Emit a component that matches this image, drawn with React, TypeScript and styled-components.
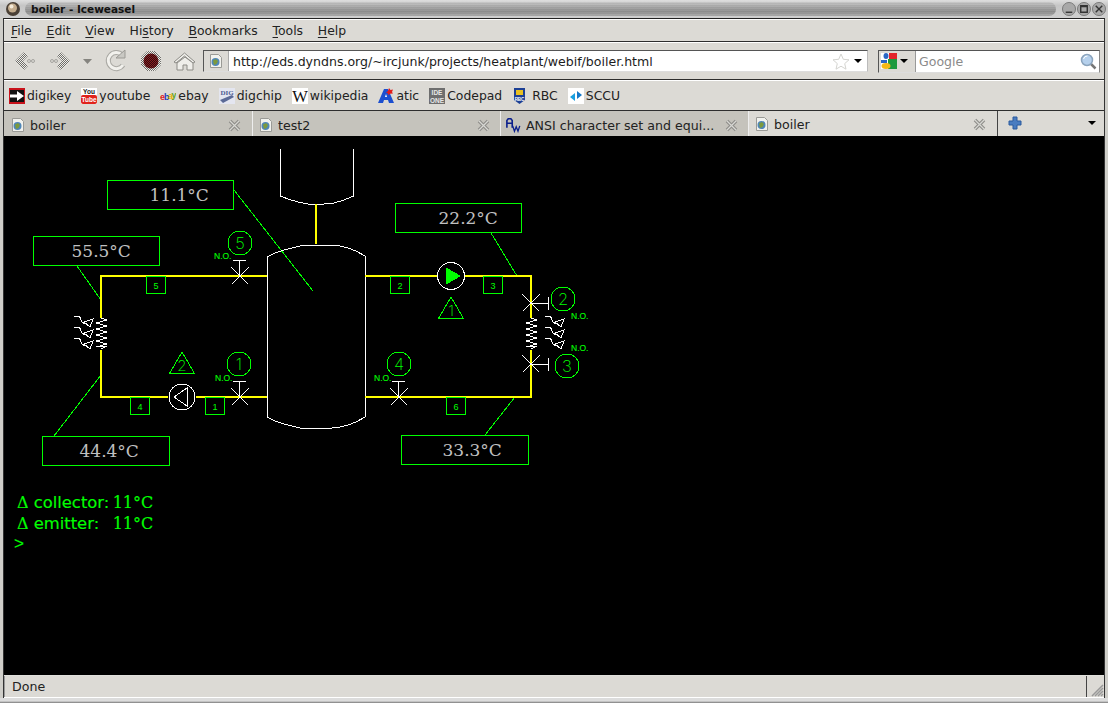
import React from 'react';
import styled, { createGlobalStyle } from 'styled-components';

const Global = createGlobalStyle`
  html, body { margin: 0; padding: 0; background: #c9c8c4; overflow: hidden; }
  #root { width: 1108px; height: 703px; }
`;

const UI = `"DejaVu Sans", "Liberation Sans", sans-serif`;
const GREEN = '#00ff00';

const Window = styled.div`
  width: 1108px; height: 703px; display: flex; flex-direction: column; box-sizing: border-box;
  background: #cfcec9; font-family: ${UI}; color: #1a1a1a; overflow: hidden;
`;
const TitleBar = styled.div`
  height: 18px; flex: none; display: flex; align-items: center; padding: 0 2px 0 5px; box-sizing: border-box; gap: 4px;
  background: linear-gradient(#dedede, #c6c6c6 30%, #cfcfcf);
`;
const TitleStripe = styled.div`
  flex: 1; height: 14px; border-radius: 7px; box-sizing: border-box; padding-left: 6px;
  display: flex; align-items: center; font-size: 10.5px; font-weight: 700; color: #111; line-height: 14px;
  background:
    repeating-linear-gradient(#0000 0 1px, #0000000d 1px 2px),
    linear-gradient(#c9c9c9, #a6a6a6 40%, #919191 70%, #b0b0b0);
`;
const WinButtons = styled.div`
  display: flex; gap: 1px; align-items: center; margin-left: 2px;
`;
const Body = styled.div`
  flex: 1; margin: 0 3px 0 3px; border-left: 1px solid #333; border-right: 1px solid #333; border-top: 1px solid #222;
  display: flex; flex-direction: column; min-height: 0; background: #dcdad5;
`;
const Bar = styled.div<{ $h: number }>`
  height: ${p => p.$h}px; flex: none; box-sizing: border-box; display: flex; align-items: center;
  background: #dcdad5; border-top: 1px solid #fff; border-bottom: 1px solid #2e2e2e;
`;
const MenuBar = styled(Bar)`
  padding-left: 7px; font-size: 12.4px;
`;
const MenuItem = styled.span`
  margin-right: 14.8px; color: #222;
  u { text-underline-offset: 2px; }
`;
const NavBar = styled(Bar)`
  padding-right: 4px;
`;
const NavIcons = styled.div`
  display: flex; align-items: center; width: 199px; flex: none;
`;
const UrlBox = styled.div`
  width: 665px; height: 22px; flex: none; display: flex; align-items: center; background: #fff; box-sizing: border-box;
  border: 1px solid #555; border-right-color: #bbb; border-bottom-color: #ddd;
`;
const UrlIconCell = styled.div`
  width: 25px; height: 100%; flex: none; background: #dcdad5; border-right: 1px solid #aaa; display: flex;
  align-items: center; justify-content: center; box-sizing: border-box;
`;
const UrlText = styled.div`
  flex: 1; padding-left: 4px; font-size: 12.55px; color: #1c1c1c; white-space: nowrap;
`;
const SearchBox = styled.div`
  width: 222px; height: 23px; flex: none; margin-left: 10px; display: flex; align-items: center; background: #fff; box-sizing: border-box;
  border: 1px solid #555; border-right-color: #888; border-bottom-color: #ddd;
`;
const SearchEngine = styled.div`
  width: 37px; height: 100%; flex: none; background: #dcdad5; border-right: 1px solid #999; display: flex; align-items: center;
  gap: 3px; padding-left: 2px; box-sizing: border-box;
`;
const SearchHint = styled.div`
  flex: 1; padding-left: 3px; font-size: 12.55px; color: #8a8a8a;
`;
const Caret = styled.span<{ $w?: number; $ml?: number; $mr?: number }>`
  width: 0; height: 0; flex: none; display: inline-block;
  margin-left: ${p => p.$ml ?? 0}px; margin-right: ${p => p.$mr ?? 0}px;
  border-left: ${p => p.$w ?? 4}px solid transparent; border-right: ${p => p.$w ?? 4}px solid transparent; border-top: ${p => p.$w ?? 4}px solid #000;
`;
const BookmarksBar = styled(Bar)`
  padding-left: 5px; font-size: 12.4px; gap: 10px;
`;
const Bookmark = styled.div`
  display: flex; align-items: center; gap: 2px; color: #222; white-space: nowrap;
  &:nth-last-child(2) { margin-left: 2px; }
`;
const TabStrip = styled.div`
  height: 25px; flex: none; display: flex; background: #dcdad5;
`;
const Tab = styled.div<{ $active?: boolean }>`
  width: ${p => (p.$active ? 249 : 248)}px; flex: none; box-sizing: border-box; display: flex; align-items: center;
  padding: ${p => (p.$active ? '1px 11px 0 5px' : '3px 10px 0 5px')}; gap: 4px;
  background: ${p => (p.$active ? '#dcdad5' : '#c5c3bc')}; border-right: 1px solid ${p => (p.$active ? '#444' : '#eee')};
  font-size: 12.6px; color: #222;
  &:first-child { width: 249px; padding-left: 6px; padding-right: 11px; }
`;
const TabTitle = styled.span`
  flex: 1; white-space: nowrap; overflow: hidden;
`;
const TabTail = styled.div`
  flex: 1; display: flex; align-items: center; justify-content: space-between; padding: 0 8.5px 2px 10px;
`;
const Content = styled.main`
  flex: 1; background: #000; min-height: 0; display: flex; flex-direction: column; border-bottom: 1px solid #e0e0dc;
`;
const Diagram = styled.svg`
  display: block; flex: none; shape-rendering: crispEdges;
`;
const Console = styled.div`
  padding-left: 10px; color: ${GREEN}; -webkit-text-stroke: 0.15px ${GREEN};
  font-family: "DejaVu Serif", serif; font-size: 16px; line-height: 21px; white-space: pre;
`;
const ConsoleLine = styled.div`
  padding-left: 3px;
`;
const Prompt = styled.div`
  font-family: "Liberation Sans", sans-serif; font-size: 17px; line-height: 20px;
`;
const ConsoleWord = styled.span`
  display: inline-block; width: 79px; font-family: "DejaVu Sans", sans-serif; font-size: 16.4px;
`;
const StatusBar = styled.div`
  height: 22px; flex: none; display: flex; background: #dcdad5; border-bottom: 1px solid #fff; box-sizing: border-box;
`;
const StatusText = styled.div`
  flex: 1; font-size: 12.6px; color: #222; padding: 3px 0 0 7px; border-left: 1px solid #999;
`;
const Grip = styled.div`
  width: 17px; flex: none; border-left: 1px solid #444; display: flex; align-items: flex-end; justify-content: flex-end;
`;
const WindowFoot = styled.div`
  height: 5px; flex: none; background: linear-gradient(#dcdcdc 60%, #777);
`;

const Favicon = () => (
  <svg width="16" height="16" viewBox="0 0 16 16" style={{ flex: 'none' }}>
    <path d="M2.500 1.500h8l3 3v10h-11z" fill="#f2f2ee" stroke="#9a9a96" />
    <circle cx="7.500" cy="9" r="4" fill="#4f86b8" />
    <path d="M5 7.500l3-1.500 2 2-1.500 3-2.500 1z" fill="#7d9a3c" />
  </svg>
);
const Close = () => (
  <svg width="13" height="13" viewBox="0 0 13 13" style={{ flex: 'none' }}>
    <path d="M2 2l9 9M11 2l-9 9" stroke="#8f8e8a" strokeWidth="3.500" />
    <path d="M2 2l9 9M11 2l-9 9" stroke="#d8d8d4" strokeWidth="1.200" />
  </svg>
);

const NavArt = () => (
  <svg width="199" height="28" viewBox="0 0 199 28">
    <defs>
      <pattern id="dith" width="2" height="2" patternUnits="userSpaceOnUse">
        <rect width="2" height="2" fill="#efeeea" />
        <rect width="1" height="1" fill="#6f6e6a" />
        <rect x="1" y="1" width="1" height="1" fill="#6f6e6a" />
      </pattern>
      <pattern id="dithDark" width="2" height="2" patternUnits="userSpaceOnUse">
        <rect width="2" height="2" fill="#8a1c20" />
        <rect width="1" height="1" fill="#2e0a0c" />
        <rect x="1" y="1" width="1" height="1" fill="#2e0a0c" />
      </pattern>
    </defs>
    {/* back */}
    <path d="M11 14L20 5l4 4-5 5 5 5-4 4z" fill="url(#dith)" />
    <circle cx="25" cy="14" r="1.500" fill="none" stroke="#a5a4a0" />
    <circle cx="29" cy="14" r="1.500" fill="none" stroke="#a5a4a0" />
    {/* forward */}
    <circle cx="48" cy="14" r="1.500" fill="none" stroke="#a5a4a0" />
    <circle cx="52" cy="14" r="1.500" fill="none" stroke="#a5a4a0" />
    <path d="M66 14L57 5l-4 4 5 5-5 5 4 4z" fill="url(#dith)" />
    <path d="M79 12h9l-4.500 5z" fill="#85847f" />
    {/* reload */}
    <path d="M118 8a8 8 0 1 0 1 10" fill="none" stroke="#a9a8a3" strokeWidth="5" />
    <path d="M118 8a8 8 0 1 0 1 10" fill="none" stroke="#f2f1ed" strokeWidth="3" />
    <path d="M112 11h9V3z" fill="#c9c8c3" stroke="#9b9a95" />
    {/* stop */}
    <path d="M143 4h8l6 6v8l-6 6h-8l-6-6v-8z" fill="url(#dith)" />
    <circle cx="147" cy="14" r="7.500" fill="url(#dithDark)" />
    {/* home */}
    <path d="M170 15l10.500-9 10.500 9-2 1-8.500-7-8.500 7z" fill="#f1f0ec" stroke="#8c8b86" />
    <path d="M173 16v7h6v-5h4v5h6v-7l-8-6z" fill="#efeeea" stroke="#8c8b86" />
  </svg>
);

const GoogleMark = () => (
  <svg width="16" height="16" viewBox="0 0 16 16" style={{ flex: 'none' }}>
    <rect width="16" height="16" fill="#fff" />
    <rect x="8" y="0" width="8" height="7" fill="#e3242b" />
    <rect x="7" y="6" width="9" height="10" fill="#1d9a3f" />
    <ellipse cx="5" cy="3" rx="2.500" ry="3" fill="#2966c4" />
    <rect x="0" y="7" width="6" height="3" fill="#2966c4" />
    <ellipse cx="5" cy="13" rx="4.500" ry="3" fill="#f5b915" />
  </svg>
);
const Lens = () => (
  <svg width="17" height="17" viewBox="0 0 17 17" style={{ marginRight: 2, flex: 'none' }}>
    <path d="M10.500 10.500l5 5" stroke="#777" strokeWidth="2.500" />
    <circle cx="7" cy="7" r="5.500" fill="#b5d0ec" stroke="#8ba4bd" strokeWidth="1.500" />
    <path d="M3.500 6a4 4 0 0 1 4-3" stroke="#fff" fill="none" />
  </svg>
);
const Star = () => (
  <svg width="18" height="17" viewBox="0 0 18 17" style={{ flex: 'none' }}>
    <path d="M9 1l2.300 5.300 5.700.5-4.300 3.800 1.300 5.600-5-3-5 3 1.300-5.600L1 6.800l5.700-.5z" fill="#fff" stroke="#d4d4d0" />
  </svg>
);

const MiniFont = `"Liberation Sans", sans-serif`;
const BmIcon = ({ kind }: { kind: string }) => {
  switch (kind) {
    case 'digikey':
      return (
        <svg width="16" height="16" viewBox="0 0 16 16">
          <rect width="16" height="16" fill="#c8131b" />
          <rect x="1" y="2" width="14" height="12" fill="#111" />
          <path d="M1 6.500h7V3l7 5-7 5V9.500H1z" fill="#fff" />
        </svg>
      );
    case 'youtube':
      return (
        <svg width="16" height="16" viewBox="0 0 16 16">
          <rect width="16" height="16" fill="#fff" />
          <rect y="7" width="16" height="9" rx="2" fill="#e0231c" />
          <text x="8" y="6" fontSize="6.500" textAnchor="middle" fontWeight="700" fill="#222" fontFamily={MiniFont}>You</text>
          <text x="8" y="14" fontSize="6.500" textAnchor="middle" fontWeight="700" fill="#fff" fontFamily={MiniFont}>Tube</text>
        </svg>
      );
    case 'ebay':
      return (
        <svg width="16" height="16" viewBox="0 0 16 16">
          <text x="0" y="12" fontSize="9" fontWeight="700" fill="#e0231c" fontFamily={MiniFont}>e</text>
          <text x="4" y="11.500" fontSize="9" fontWeight="700" fill="#1a3fb5" fontFamily={MiniFont}>b</text>
          <text x="8" y="10.500" fontSize="9" fontWeight="700" fill="#e8b400" fontFamily={MiniFont}>a</text>
          <text x="11.500" y="9.500" fontSize="9" fontWeight="700" fill="#5ea51e" fontFamily={MiniFont}>y</text>
        </svg>
      );
    case 'digchip':
      return (
        <svg width="16" height="16" viewBox="0 0 16 16">
          <rect width="16" height="16" fill="#e4e6f0" />
          <text x="8" y="6.500" fontSize="7" textAnchor="middle" fontWeight="700" fill="#4a5a90" fontFamily={`"Liberation Serif", serif`}>DIG</text>
          <path d="M1 12l12-5 2 2-11 6z" fill="#5b6a96" />
        </svg>
      );
    case 'wikipedia':
      return (
        <svg width="16" height="16" viewBox="0 0 16 16">
          <rect width="16" height="16" fill="#fff" />
          <text x="8" y="13.500" fontSize="16.500" textAnchor="middle" fill="#111" fontFamily={`"Liberation Serif", serif`}>W</text>
        </svg>
      );
    case 'atic':
      return (
        <svg width="16" height="16" viewBox="0 0 16 16">
          <path d="M0 15L6 1h4l6 14h-5l-1-3H6l-1 3z" fill="#1c4fd0" />
          <path d="M7 9h2l-1-3z" fill="#fff" />
          <path d="M11 0l1.500 2 2.500-.5-1 2.500 1 1.500-3 .2-1.500 1.300-1-2-1.500-.5 2-1.500z" fill="#e21c1c" />
        </svg>
      );
    case 'codepad':
      return (
        <svg width="16" height="16" viewBox="0 0 16 16">
          <rect width="16" height="16" fill="#6e6e6e" />
          <text x="8" y="7" fontSize="6.500" textAnchor="middle" fontWeight="700" fill="#e8e8e8" fontFamily={MiniFont}>IDE</text>
          <text x="8" y="14.500" fontSize="6.500" textAnchor="middle" fontWeight="700" fill="#e8e8e8" fontFamily={MiniFont}>ONE</text>
        </svg>
      );
    case 'rbc':
      return (
        <svg width="16" height="16" viewBox="0 0 16 16">
          <path d="M0 0h11v12l-5.500 4L0 12z" fill="#1c3f94" />
          <path d="M2 2h7v5H2z" fill="#e8c020" />
          <text x="5.500" y="13" fontSize="4.500" textAnchor="middle" fontWeight="700" fill="#fff" fontFamily={MiniFont}>RBC</text>
        </svg>
      );
    default:
      return (
        <svg width="16" height="16" viewBox="0 0 16 16">
          <rect width="16" height="16" fill="#fff" />
          <path d="M2 9l5-4v8z" fill="#1aa0e0" />
          <path d="M14 7L9 3v8z" fill="#1478c8" />
        </svg>
      );
  }
};

const AnsiIcon = () => (
  <svg width="16" height="16" viewBox="0 0 18 16" style={{ flex: 'none' }}>
    <path d="M1 11V3l1.500-2h3L7 3v8M1 6h6" fill="none" stroke="#0b1f8c" strokeWidth="1.800" />
    <path d="M7.500 9l2 6 2-5 2 5 2-6" fill="none" stroke="#0b1f8c" strokeWidth="1.500" />
  </svg>
);

/* ---- boiler schematic ---- */
const W = '#ffffff';
const Y = '#ffff00';
const Wire = styled.polyline<{ $c: string; $w?: number }>`
  fill: none; stroke: ${p => p.$c}; stroke-width: ${p => p.$w ?? 1}px;
`;
const Outline = styled.rect`
  fill: none; stroke: ${GREEN}; stroke-width: 1px;
`;
const Temp = styled.text`
  font-family: "DejaVu Serif", serif; font-size: 17px; fill: #c0c0c0;
`;
const Num = styled.text<{ $s?: number }>`
  font-family: Inter, "Liberation Sans", sans-serif; font-weight: 200; font-size: ${p => p.$s ?? 16.5}px; fill: ${GREEN}; text-anchor: middle;
`;
const TagNum = styled.text`
  font-family: "Liberation Sans", sans-serif; font-size: 9px; fill: ${GREEN}; text-anchor: middle;
`;
const NO = styled.text`
  font-family: "Liberation Sans", sans-serif; font-size: 8.500px; fill: ${GREEN}; stroke: ${GREEN}; stroke-width: 0.1px;
`;

const TempBox = ({ x, y, w, h, tx, t }: { x: number; y: number; w: number; h: number; tx: number; t: string }) => (
  <g>
    <Outline x={x + 0.5} y={y + 0.5} width={w} height={h} />
    <Temp x={tx - 0.5} y={y + h / 2 + 6.500}>{t}</Temp>
  </g>
);
const Tag = ({ x, y, w = 19, h = 17, t }: { x: number; y: number; w?: number; h?: number; t: string }) => (
  <g>
    <Outline x={x + 0.5} y={y + 0.5} width={w} height={h} />
    <TagNum x={x + w / 2 + 0.5} y={y + h / 2 + 4}>{t}</TagNum>
  </g>
);
const Cross = ({ x, y }: { x: number; y: number }) => (
  <path
    d={`M${x - 8.500} ${y - 8.500}L${x + 8.500} ${y + 8.500}M${x + 8.500} ${y - 8.500}L${x - 8.500} ${y + 8.500}`}
    stroke={W} strokeWidth="1" fill="none"
  />
);
const StemUp = ({ x, y }: { x: number; y: number }) => (
  <path d={`M${x + 0.5} ${y}V${y - 16}M${x - 6} ${y - 15.500}H${x + 7}`} stroke={W} strokeWidth="1" fill="none" />
);
const StemRight = ({ x, y }: { x: number; y: number }) => (
  <path d={`M${x} ${y + 0.5}H${x + 17}M${x + 17.500} ${y - 6}V${y + 7}`} stroke={W} strokeWidth="1" fill="none" />
);
const Bubble = ({ x, y, t }: { x: number; y: number; t: string }) => (
  <g>
    <circle cx={x} cy={y} r={12} fill="none" stroke={GREEN} strokeWidth="1" />
    <Num x={x} y={y + 6}>{t}</Num>
  </g>
);
const Alarm = ({ x, top, t }: { x: number; top: number; t: string }) => (
  <g>
    <path d={`M${x} ${top}L${x + 12.500} ${top + 21.500}H${x - 12.500}Z`} fill="none" stroke={GREEN} strokeWidth="1" />
    <Num x={x} y={top + 19} $s={15}>{t}</Num>
  </g>
);
const coil = (x: number) => {
  const pts: string[] = [`${x},318`];
  for (let i = 0; i < 5; i++) {
    const y = 320 + i * 6;
    pts.push(`${x + 6},${y}`, `${x - 5},${y + 3}`);
  }
  pts.push(`${x + 6},346`, `${x},349`);
  return pts.join(' ');
};
const Rays = ({ x, y }: { x: number; y: number }) => (
  <g>
    {[0, 1, 2].map(i => (
      <g key={i} transform={`translate(${x} ${y + i * 11})`} stroke={W} strokeWidth="1" fill="none">
        <path d="M0 0h4q2 0 2.500 3t3 4h3" />
        <path d="M19 3l-9 3 6 5z" />
      </g>
    ))}
  </g>
);

const tankTop = '267,257 275,253 284,250 292,248 300,246 316,245 332,245 340,246 348,248 356,251 365,256';
const tankBot = '267,417 275,421 284,424 292,426 300,428 316,428 332,428 340,427 348,425 356,422 365,417';

const Schematic = () => (
  <Diagram width="600" height="356" viewBox="4 136 600 356">
    {/* leaders */}
    <path d="M234 190L313 291M77 266L101 300M101 375L54 436M491 233L517 276M515 397L485 435" stroke={GREEN} strokeWidth="1" fill="none" />
    {/* storage vessels */}
    <Wire $c={W} points="280.500,149 280.500,196 288,199 298,202 308,204 324,204 334,203 344,200 353.500,196 353.500,149" />
    <Wire $c={W} points={tankTop} />
    <Wire $c={W} points={tankBot} />
    <Wire $c={W} points="267.500,257 267.500,417" />
    <Wire $c={W} points="365.500,256 365.500,417" />
    {/* pipes */}
    <Wire $c={Y} $w={2} points="316,204 316,244" />
    <Wire $c={Y} $w={2} points="101,318 101,276 267,276" />
    <Wire $c={Y} $w={2} points="101,350 101,397 168,397" />
    <Wire $c={Y} $w={2} points="196,397 267,397" />
    <Wire $c={Y} $w={2} points="365,276 437,276" />
    <Wire $c={Y} $w={2} points="465,276 531,276 531,318" />
    <Wire $c={Y} $w={2} points="365,397 531,397 531,350" />
    {/* coils */}
    <Wire $c={W} points={coil(101)} />
    <Wire $c={W} points={coil(531)} />
    <Rays x={74} y={316} />
    <Rays x={545} y={316} />
    {/* pumps */}
    <circle cx="182" cy="397" r="13" fill="none" stroke={W} />
    <path d="M174 397L187 388V406Z" fill="none" stroke={W} />
    <circle cx="451" cy="276" r="13.500" fill="none" stroke={W} />
    <path d="M446 268L460 276L446 284Z" fill={GREEN} stroke={GREEN} />
    <Alarm x={182} top={352} t="2" />
    <Alarm x={451} top={297} t="1" />
    {/* valves */}
    <Cross x={240} y={276} /><StemUp x={239} y={276} /><Bubble x={240} y={243} t="5" />
    <NO x={214} y={259}>N.O.</NO>
    <Cross x={240} y={397} /><StemUp x={239} y={397} /><Bubble x={239} y={364} t="1" />
    <NO x={215} y={381}>N.O.</NO>
    <Cross x={399} y={397} /><StemUp x={398} y={397} /><Bubble x={399} y={364} t="4" />
    <NO x={374} y={381}>N.O.</NO>
    <Cross x={531} y={303} /><StemRight x={531} y={303} /><Bubble x={563} y={299} t="2" />
    <NO x={571} y={319}>N.O.</NO>
    <Cross x={531} y={364} /><StemRight x={531} y={364} /><Bubble x={567} y={366} t="3" />
    <NO x={571} y={351}>N.O.</NO>
    {/* tags */}
    <Tag x={146} y={276} t="5" />
    <Tag x={130} y={397} t="4" />
    <Tag x={205} y={397} t="1" />
    <Tag x={390} y={276} t="2" />
    <Tag x={483} y={276} t="3" />
    <Tag x={446} y={397} t="6" />
    {/* readings */}
    <TempBox x={107} y={180} w={126} h={29} tx={150} t="11.1°C" />
    <TempBox x={33} y={236} w={126} h={29} tx={72} t="55.5°C" />
    <TempBox x={395} y={203} w={126} h={29} tx={439} t="22.2°C" />
    <TempBox x={42} y={436} w={127} h={29} tx={80} t="44.4°C" />
    <TempBox x={401} y={435} w={127} h={29} tx={443} t="33.3°C" />
  </Diagram>
);

const menus: [string, string, string][] = [
  ['', 'F', 'ile'], ['', 'E', 'dit'], ['', 'V', 'iew'], ['Hi', 's', 'tory'], ['', 'B', 'ookmarks'], ['', 'T', 'ools'], ['', 'H', 'elp'],
];
const bookmarks = [
  ['digikey', 'digikey'], ['youtube', 'youtube'], ['ebay', 'ebay'], ['digchip', 'digchip'], ['wikipedia', 'wikipedia'],
  ['atic', 'atic'], ['codepad', 'Codepad'], ['rbc', 'RBC'], ['sccu', 'SCCU'],
];

export default function App() {
  return (
    <Window>
      <Global />
      <TitleBar>
        <svg width="16" height="16" viewBox="0 0 16 16" style={{ flex: 'none' }}>
          <circle cx="8" cy="8" r="7" fill="#4a4036" />
          <circle cx="7.500" cy="7" r="4.500" fill="#c4ad8e" />
          <circle cx="6.500" cy="5.500" r="2" fill="#f4ead8" />
        </svg>
        <TitleStripe>boiler - Iceweasel</TitleStripe>
        <WinButtons>
          {['M4 11h7', 'M4 4h7v7H4zM4 5h7', 'M4 4l7 7M11 4l-7 7'].map(d => (
            <svg key={d} width="14" height="14" viewBox="0 0 15 15">
              <circle cx="7.500" cy="7.500" r="7" fill="#a9a9a9" stroke="#777" />
              <path d={d} stroke="#333" strokeWidth="1.500" fill="none" />
            </svg>
          ))}
        </WinButtons>
      </TitleBar>
      <Body>
        <MenuBar $h={23}>
          {menus.map(([a, u, b]) => (
            <MenuItem key={u + b}>{a}<u>{u}</u>{b}</MenuItem>
          ))}
        </MenuBar>
        <NavBar $h={38}>
          <NavIcons><NavArt /></NavIcons>
          <UrlBox>
            <UrlIconCell><Favicon /></UrlIconCell>
            <UrlText>http://eds.dyndns.org/~ircjunk/projects/heatplant/webif/boiler.html</UrlText>
            <Star />
            <Caret $w={4.500} $ml={4} $mr={5} />
          </UrlBox>
          <SearchBox>
            <SearchEngine><GoogleMark /><Caret $w={4.500} /></SearchEngine>
            <SearchHint>Google</SearchHint>
            <Lens />
          </SearchBox>
        </NavBar>
        <BookmarksBar $h={31}>
          {bookmarks.map(([k, t]) => (
            <Bookmark key={k}><BmIcon kind={k} />{t}</Bookmark>
          ))}
        </BookmarksBar>
        <TabStrip>
          <Tab><Favicon /><TabTitle>boiler</TabTitle><Close /></Tab>
          <Tab><Favicon /><TabTitle>test2</TabTitle><Close /></Tab>
          <Tab><AnsiIcon /><TabTitle>ANSI character set and equi...</TabTitle><Close /></Tab>
          <Tab $active><Favicon /><TabTitle>boiler</TabTitle><Close /></Tab>
          <TabTail>
            <svg width="14" height="14" viewBox="0 0 14 14">
              <path d="M5 1h4v4h4v4H9v4H5V9H1V5h4z" fill="#4a7cc0" stroke="#2a5a9e" />
            </svg>
            <Caret $w={4.500} />
          </TabTail>
        </TabStrip>
        <Content>
          <Schematic />
          <Console>
            <ConsoleLine>Δ <ConsoleWord>collector:</ConsoleWord>11°C</ConsoleLine>
            <ConsoleLine>Δ <ConsoleWord>emitter:</ConsoleWord>11°C</ConsoleLine>
            <Prompt>&gt;</Prompt>
          </Console>
        </Content>
        <StatusBar>
          <StatusText>Done</StatusText>
          <Grip>
            <svg width="15" height="15" viewBox="0 0 15 15">
              <path d="M14 3L3 14M14 6L6 14M14 9L9 14M14 12L12 14" stroke="#999" strokeWidth="1.500" />
            </svg>
          </Grip>
        </StatusBar>
      </Body>
      <WindowFoot />
    </Window>
  );
}
